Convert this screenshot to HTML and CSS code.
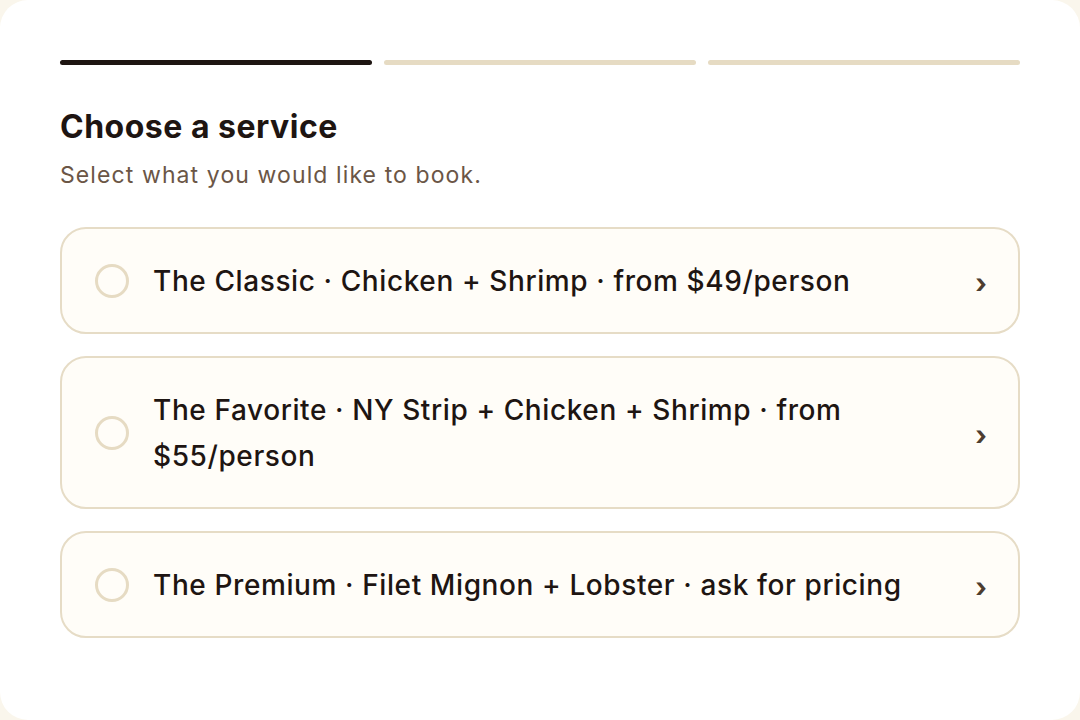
FILE: index.html
```html
<!DOCTYPE html>
<html lang="en">
  <head>
    <meta name="viewport" content="width=device-width, initial-scale=1.0" />
    <title>Choose a service</title>
    <link rel="stylesheet" href="styles.css">
  </head>

  <body>
    <div class="card">
      <!-- Steps -->
      <div class="steps">
        <div class="step active"></div>
        <div class="step"></div>
        <div class="step"></div>
      </div>

      <h1>Choose a service</h1>
      <p class="subtitle">Select what you would like to book.</p>

      <!-- Options -->
      <div class="options">
        <button class="option">
          <span class="radio"></span>
          <span class="label">The Classic · Chicken + Shrimp · from $49/person</span>
          <span class="chevron">›</span>
        </button>
        <button class="option">
          <span class="radio"></span>
          <span class="label">The Favorite · NY Strip + Chicken + Shrimp · from $55/person</span>
          <span class="chevron">›</span>
        </button>
        <button class="option">
          <span class="radio"></span>
          <span class="label">The Premium · Filet Mignon + Lobster · ask for pricing</span>
          <span class="chevron">›</span>
        </button>
      </div>
    </div>
  </body>
</html>
```

FILE: styles.css
```css
* {
  margin: 0;
  padding: 0;
  box-sizing: border-box;
  font-family: 'Inter', 'Noto Sans', sans-serif;
}

body {
  background-color: #faf6ec;
  min-height: 100vh;
}

.card {
  background-color: #fff;
  border-radius: 28px;
  min-height: 720px;
  padding: 60px 60px;
}

/* Step bar */
.steps {
  display: flex;
  gap: 12px;
}

.step {
  flex: 1;
  height: 5px;
  border-radius: 3px;
  background-color: #e6dbc3;
}

.step.active {
  background-color: #1e1512;
}

h1 {
  margin-top: 42px;
  font-size: 32px;
  font-weight: 700;
  color: #1e1512;
  letter-spacing: 0.5px;
  line-height: 40px;
}

.subtitle {
  margin-top: 13px;
  font-size: 23px;
  color: #6b5646;
  letter-spacing: 1.1px;
  line-height: 30px;
}

.options {
  display: flex;
  flex-direction: column;
  gap: 22px;
  margin-top: 37px;
}

.option {
  display: flex;
  align-items: center;
  gap: 24px;
  width: 100%;
  text-align: left;
  padding: 29px 32px 28px;
  background-color: #fffdf8;
  border: 2px solid #e6dcc6;
  border-radius: 26px;
  cursor: pointer;
}

.radio {
  flex: none;
  width: 34px;
  height: 34px;
  margin-left: 1px;
  border: 3px solid #e6dbc3;
  border-radius: 50%;
}

.label {
  flex: 1;
  font-size: 28px;
  font-weight: 500;
  letter-spacing: 0.6px;
  line-height: 46px;
  color: #1e1512;
  padding-right: 30px;
}

.chevron {
  flex: none;
  font-size: 27px;
  font-weight: 700;
  color: #4d3d30;
  margin-right: -1px;
  padding-top: 4px;
}
```
